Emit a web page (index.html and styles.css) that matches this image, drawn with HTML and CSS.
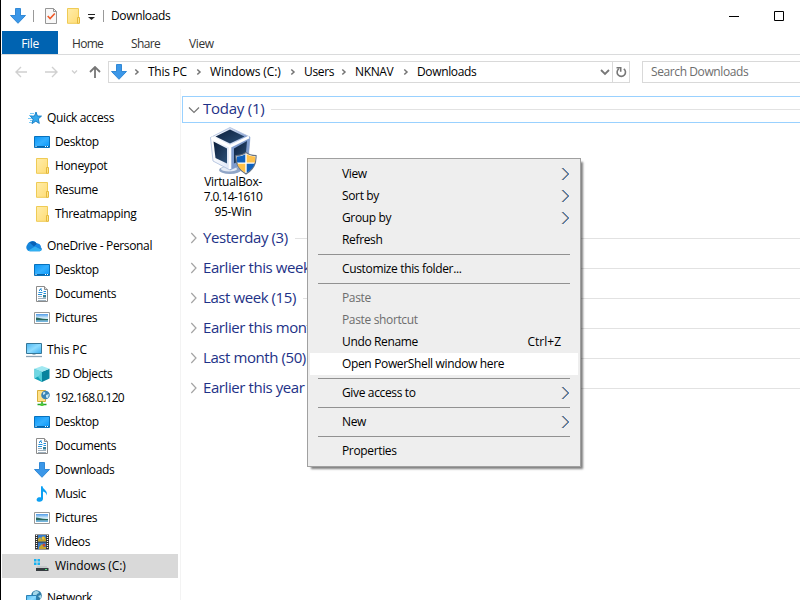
FILE: index.html
```html
<!DOCTYPE html>
<html lang="en">
<head>
<meta charset="utf-8">
<title>Downloads</title>
<link rel="stylesheet" href="styles.css">
</head>
<body>
<svg class="defs" aria-hidden="true">
  <defs>
    <linearGradient id="gb" x1="0" y1="0" x2="1" y2="1"><stop offset="0" stop-color="#0a95f5"/><stop offset=".5" stop-color="#35b0ff"/><stop offset="1" stop-color="#0795f8"/></linearGradient>
    <linearGradient id="gf" x1="0" y1="0" x2="1" y2="1"><stop offset="0" stop-color="#ffedaa"/><stop offset="1" stop-color="#ffdc76"/></linearGradient>
    <linearGradient id="gs" x1="0" y1="0" x2="0" y2="1"><stop offset="0" stop-color="#4f9be8"/><stop offset=".5" stop-color="#d8eef8"/><stop offset="1" stop-color="#8cc4dd"/></linearGradient>
    <linearGradient id="gm" x1="0" y1="0" x2="1" y2="1"><stop offset="0" stop-color="#4ab5f2"/><stop offset=".5" stop-color="#8fdcff"/><stop offset="1" stop-color="#39adf0"/></linearGradient>
    <linearGradient id="gc" x1="0" y1="0" x2="1" y2="1"><stop offset="0" stop-color="#0c1f3c"/><stop offset="1" stop-color="#2c5078"/></linearGradient>
    <linearGradient id="ge" x1="0" y1="0" x2="1" y2="0"><stop offset="0" stop-color="#ffffff"/><stop offset=".5" stop-color="#dbe4f6"/><stop offset="1" stop-color="#6f8ec6"/></linearGradient>
  </defs>
  <symbol id="down" viewBox="0 0 16 16"><path d="M5.5.5h5v7h5L8 15.3.5 7.500h5z" fill="#3b97e8" stroke="#2681d3" stroke-width=".9"/></symbol>
  <symbol id="desktop" viewBox="0 0 16 16"><path d="M.5 2.500h15v11H.5z" fill="url(#gb)" stroke="#0872bd"/><path d="M1 12.500h14" stroke="#0764a8"/><path d="M1.500 12.500h1M11 12.500h1M13 12.500h1" stroke="#fff"/></symbol>
  <symbol id="folder" viewBox="0 0 16 16"><path d="M2.500.500h11v14.800h-11z" fill="url(#gf)" stroke="#efcb55"/><path d="M12.500 9.500h2v5.800h-2z" fill="#ffe48c" stroke="#e4b93c"/></symbol>
  <symbol id="doc" viewBox="0 0 16 16"><path d="M2.500.500h8l3 3v12h-11z" fill="#fff" stroke="#8b8b8b"/><path d="M10.500.500v3h3" fill="#ddd" stroke="#8b8b8b"/><path d="M6.500 2.500h1M5.500 3.500h2M5 4.500h1M7 4.500h1M4.500 6.500h4M9.500 5.500h2.500M9.500 7.500h2.500M4 8.500h4" stroke="#258fd9"/><path d="M4 10.500h4M4 12.500h8M4 14.500h8" stroke="#9fb0bd"/><path d="M9 9h3v2.500H9z" fill="#357f99"/></symbol>
  <symbol id="pic" viewBox="0 0 16 16"><path d="M.5 2.500h15v11H.5z" fill="#fff" stroke="#999"/><path d="M2 4h12v8H2z" fill="url(#gs)"/><path d="M2 7.500c3 0 6 2 12 1.500v1.500H2z" fill="#28675d"/><path d="M2 10.500h12V12H2z" fill="#74b5dd"/></symbol>
  <symbol id="star" viewBox="0 0 16 16"><path d="M10 2l1.400 4 4.100.1-3.200 2.800 1 4.500-3.500-2.200-3.800 2.400 1.100-4.500L4.300 6.200l4.200-.2z" fill="#35a9ec" stroke="#127bc4" stroke-width=".9"/><path d="M4 3.500h4M3 5.500h3M2 8.500h4M4 10.500h2M3 12.500h3" stroke="#6cc4f4" stroke-width=".9"/></symbol>
  <symbol id="cloud" viewBox="0 0 16 16"><path d="M4 13.300a4 4 0 0 1-2.800-6.500A5.300 5.300 0 0 1 10.700 5.500a4 4 0 0 1 4 3.700A2.200 2.200 0 0 1 13.800 13.300z" fill="#1686dc"/><path d="M3.500 4.600a5 5 0 0 1 7.500 1.300L8 8.600z" fill="#0862b7"/><path d="M8 8.500l3.400-3a4 4 0 0 1 3.400 4z" fill="#1787e5"/><path d="M2 12.700l7-4.200 6.500 3.300a2 2 0 0 1-1.800 1.500H4z" fill="#32b0f1"/></symbol>
  <symbol id="pc" viewBox="0 0 16 16"><path d="M.5 1.500h15v10H.5z" fill="url(#gm)" stroke="#367798"/><path d="M6.500 12h3v1h-3z" fill="#a8bdc9"/><path d="M0 14.500h16" stroke="#8da3b3" stroke-width="1.300"/></symbol>
  <symbol id="cube" viewBox="0 0 16 16"><path d="M.5 2.700L8 5.700V16L.5 12.500z" fill="#13a3b8"/><path d="M15.500 2.700L8 5.700V16l7.500-3.500z" fill="#08839d"/><path d="M.5 2.700L8 0l7.500 2.700L8 5.700z" fill="#a0e8f1"/><path d="M8 5.700V16l-4-5.300z" fill="#50cbd8"/><path d="M.5 2.700L8 5.700 5 10 .5 12.500z" fill="#6fd7e3"/></symbol>
  <symbol id="ftp" viewBox="0 0 16 16"><path d="M3.500.500h8v11h-8z" fill="#ffe188" stroke="#d9af3b"/><circle cx="11.500" cy="5" r="4.300" fill="#3c83b5"/><path d="M9 2.500c2-1.500 3 0 2 1.500l-2 1zM12 5l3-1-1 4-2-.5z" fill="#c2e5f4"/><path d="M8 11.500v3M3.500 14.500h9" stroke="#25a32a" stroke-width="1.500"/><path d="M6.500 13.500h3v2.500h-3z" fill="#50cb38"/></symbol>
  <symbol id="music" viewBox="0 0 16 16"><path d="M7 .3h1.600c.2 3.300 5.700 4.200 4 9.200-.3-2.500-1.700-3.700-3.600-4v7.300c0 2.200-2 3.200-4 3s-3-1.700-2.100-3.100C3.700 11.400 5.500 11 7 11.500z" fill="#0ca0f3"/></symbol>
  <symbol id="video" viewBox="0 0 16 16"><path d="M1 .500h14v15H1z" fill="#303030"/><path d="M4 1h8v6.500H4zM4 8.500h8V15H4z" fill="#367dce"/><path d="M4 5l2-2 2 3 2-4 2 3v2.500H4zM5 13l3-3 2 3h2v2H5z" fill="#c5a62d"/><circle cx="9" cy="4" r="1.500" fill="#f2c22f"/><circle cx="10" cy="11" r="1.500" fill="#ca4832"/><path d="M2.500 1v14M13.500 1v14" stroke="#fff" stroke-width="1.300" stroke-dasharray="1 1"/></symbol>
  <symbol id="drive" viewBox="0 0 16 16"><path d="M0 1h2.500v2.500H0zM3.500 1H6v2.500H3.500zM0 4.500h2.500V7H0zM3.500 4.500H6V7H3.500z" fill="#17b2f2"/><path d="M3.500 8h9l2 2.500H2z" fill="#c5c8ca"/><path d="M2 10h12.500v3H2z" fill="#353b40"/><path d="M11 11.500h2" stroke="#46e67a"/></symbol>
  <symbol id="net" viewBox="0 0 16 16"><circle cx="10.500" cy="5.500" r="5.300" fill="#317da7"/><path d="M7 3c2-3 6-2 6 0l-2 1-1 2-3 1zM12 6l3-1v4z" fill="#a6d8e9"/><path d="M.5 5.500h10v8H.5z" fill="url(#gm)" stroke="#2d82b4"/></symbol>
  <symbol id="chev" viewBox="0 0 8 8"><path d="M2.300 1.500L5 4 2.300 6.500" fill="none" stroke="#747474" stroke-width="1.500"/></symbol>
  <symbol id="exp" viewBox="0 0 8 12"><path d="M1.300 1L6 6l-4.700 5" fill="none" stroke="#a4a4a4" stroke-width="1.200"/></symbol>
  <symbol id="sub" viewBox="0 0 9 14"><path d="M.7 1L6.700 7l-6 6" fill="none" stroke="#dba775"/><path d="M1.900 1l6 6-6 6" fill="none" stroke="#3b91df"/><path d="M1.300 1l6 6-6 6" fill="none" stroke="#29294d" stroke-width=".6"/></symbol>
</svg>
<div class="window">
  <header class="titlebar">
    <svg class="i16 app"><use href="#down"/></svg><i class="bar bar-a"></i>
    <svg class="i16 check" viewBox="0 0 16 16"><path d="M2.500.500h8l3 3v12h-11z" fill="#f8f8f8" stroke="#969696"/><path d="M10.500.500v3h3" fill="none" stroke="#969696"/><path d="M4.700 8l2.400 2.600L11.800 5.500" fill="none" stroke="#ef5a29" stroke-width="1.600"/></svg>
    <svg class="i16 fold"><use href="#folder"/></svg>
    <svg class="drop" viewBox="0 0 7 6"><path d="M0 .5h7" stroke="#222"/><path d="M0 3h7L3.500 6z" fill="#222"/></svg>
    <i class="bar bar-b"></i><span class="title">Downloads</span>
    <svg class="winbtns" viewBox="0 0 60 12"><path d="M0 6.500h10M45.500 1.500h9v9h-9z" fill="none" stroke="#000"/></svg>
  </header>
  <nav class="tabs"><span class="file">File</span><span class="home">Home</span><span class="share">Share</span><span class="view">View</span></nav>
  <div class="address">
    <svg class="navs" viewBox="0 0 88 16" fill="none"><path d="M26 8H15M20 3l-5 5 5 5" stroke="#d0d0d0" stroke-width="1.400"/><path d="M44 8h11.500M51 3l5 5-5 5" stroke="#d0d0d0" stroke-width="1.400"/><path d="M71 6.500L73.500 9 76 6.500" stroke="#d0d0d0" stroke-width="1.300"/></svg>
    <svg class="up" viewBox="0 0 12 12"><path d="M6 12V1M1 6l5-5 5 5" fill="none" stroke="#767676" stroke-width="1.800"/></svg>
    <div class="path">
      <svg class="i16"><use href="#down"/></svg>
      <svg class="c"><use href="#chev"/></svg><span class="p1">This PC</span>
      <svg class="c"><use href="#chev"/></svg><span class="p2">Windows (C:)</span>
      <svg class="c"><use href="#chev"/></svg><span class="p3">Users</span>
      <svg class="c"><use href="#chev"/></svg><span class="p4">NKNAV</span>
      <svg class="c"><use href="#chev"/></svg><span class="p5">Downloads</span>
      <svg class="dd" viewBox="0 0 10 8"><path d="M1 2l4 4 4-4" fill="none" stroke="#777" stroke-width="1.800"/></svg>
      <div class="refresh"><svg viewBox="0 0 12 12"><path d="M8.800 2.800a4.200 4.200 0 1 1-5 0M1.500 1.700h4.200v4" fill="none" stroke="#777" stroke-width="1.600"/></svg></div>
    </div>
    <div class="search">Search Downloads</div>
  </div>
  <div class="body">
    <aside class="side">
      <section>
        <div class="row top"><svg class="i16"><use href="#star"/></svg><span>Quick access</span></div>
        <div class="row"><svg class="i16"><use href="#desktop"/></svg><span>Desktop</span></div>
        <div class="row"><svg class="i16"><use href="#folder"/></svg><span>Honeypot</span></div>
        <div class="row"><svg class="i16"><use href="#folder"/></svg><span>Resume</span></div>
        <div class="row"><svg class="i16"><use href="#folder"/></svg><span>Threatmapping</span></div>
      </section>
      <section>
        <div class="row top"><svg class="i16"><use href="#cloud"/></svg><span>OneDrive - Personal</span></div>
        <div class="row"><svg class="i16"><use href="#desktop"/></svg><span>Desktop</span></div>
        <div class="row"><svg class="i16"><use href="#doc"/></svg><span>Documents</span></div>
        <div class="row"><svg class="i16"><use href="#pic"/></svg><span>Pictures</span></div>
      </section>
      <section>
        <div class="row top"><svg class="i16"><use href="#pc"/></svg><span class="loose">This PC</span></div>
        <div class="row"><svg class="i16"><use href="#cube"/></svg><span>3D Objects</span></div>
        <div class="row"><svg class="i16"><use href="#ftp"/></svg><span class="ip">192.168.0.120</span></div>
        <div class="row"><svg class="i16"><use href="#desktop"/></svg><span>Desktop</span></div>
        <div class="row"><svg class="i16"><use href="#doc"/></svg><span>Documents</span></div>
        <div class="row"><svg class="i16"><use href="#down"/></svg><span>Downloads</span></div>
        <div class="row"><svg class="i16"><use href="#music"/></svg><span>Music</span></div>
        <div class="row"><svg class="i16"><use href="#pic"/></svg><span>Pictures</span></div>
        <div class="row"><svg class="i16"><use href="#video"/></svg><span>Videos</span></div>
        <div class="row sel"><svg class="i16"><use href="#drive"/></svg><span class="loose">Windows (C:)</span></div>
      </section>
      <section>
        <div class="row top"><svg class="i16"><use href="#net"/></svg><span>Network</span></div>
      </section>
    </aside>
    <main class="main">
      <div class="today"><svg class="open" viewBox="0 0 12 8"><path d="M1 1.500l5 5 5-5" fill="none" stroke="#777" stroke-width="1.200"/></svg><span>Today (1)</span><i></i></div>
      <div class="fileitem">
        <svg class="vbox" viewBox="0 0 48 48">
          <ellipse cx="21" cy="43" rx="11" ry="4" fill="#8fa5c7"/><ellipse cx="20" cy="42" rx="8" ry="2.500" fill="#e4ebf6"/>
          <path d="M21 .5l20 9.500-2 25L21 43 4 34 1.500 10.500z" fill="url(#ge)" stroke="#a9bbdb" stroke-width=".8"/>
          <path d="M21 20l20-10-2 25-18 8z" fill="#7f9ccd"/>
          <path d="M21 2.500l14.500 7-14.500 7-14.500-7z" fill="url(#gc)"/><path d="M4.500 14.500l13.500 7v15L6.500 31z" fill="url(#gc)"/><path d="M38 14l-13 7.500v15L36.500 31z" fill="url(#gc)"/>
          <path d="M2.500 10.500L21 19.500l19-9.500M21 19.500V42" fill="none" stroke="#fff" stroke-width="2.600"/>
          <path d="M37 25.500c3 2.500 6 3 10 3 .5 8-3 14.500-10 18.500-7-4-10.500-10.500-10-18.500 4 0 7-.5 10-3z" fill="#fff" stroke="#687382" stroke-width="1.200"/>
          <path d="M36.300 27.300V35.500h-8.200c-.2-2-.2-4-.1-6 3.200-.1 5.600-.7 8.300-2.200zM37.700 36.800h7.900c-1.200 3.700-4 6.700-7.900 9z" fill="#0e60bd"/><path d="M37.700 27.300c2.600 1.500 5.200 2.100 8.400 2.200.1 2 .1 4-.2 6h-8.200zM36.300 36.800h-8c1.200 3.700 4 6.700 8 9z" fill="#ffc14b"/>
        </svg>
        <span class="v1">VirtualBox-</span><span class="v2">7.0.14-1610</span><span class="v3">95-Win</span>
      </div>
      <div class="group"><svg><use href="#exp"/></svg><span>Yesterday (3)</span><i></i></div>
      <div class="group"><svg><use href="#exp"/></svg><span>Earlier this week (8)</span><i></i></div>
      <div class="group"><svg><use href="#exp"/></svg><span>Last week (15)</span><i></i></div>
      <div class="group"><svg><use href="#exp"/></svg><span>Earlier this month (9)</span><i></i></div>
      <div class="group"><svg><use href="#exp"/></svg><span>Last month (50)</span><i></i></div>
      <div class="group"><svg><use href="#exp"/></svg><span>Earlier this year (9)</span><i></i></div>
    </main>
  </div>
  <div class="menu">
    <div class="mi"><span>View</span><svg><use href="#sub"/></svg></div>
    <div class="mi"><span>Sort by</span><svg><use href="#sub"/></svg></div>
    <div class="mi"><span>Group by</span><svg><use href="#sub"/></svg></div>
    <div class="mi"><span>Refresh</span></div>
    <hr>
    <div class="mi"><span>Customize this folder...</span></div>
    <hr>
    <div class="mi off"><span>Paste</span></div>
    <div class="mi off"><span>Paste shortcut</span></div>
    <div class="mi"><span>Undo Rename</span><span class="key">Ctrl+Z</span></div>
    <div class="mi hot"><span>Open PowerShell window here</span></div>
    <hr>
    <div class="mi"><span>Give access to</span><svg><use href="#sub"/></svg></div>
    <hr>
    <div class="mi"><span>New</span><svg><use href="#sub"/></svg></div>
    <hr>
    <div class="mi"><span>Properties</span></div>
  </div>
</div>
</body>
</html>
```
FILE: styles.css
```css
* { box-sizing: border-box; }
body { margin: 0; font: 12px/16px "Open Sans", "Noto Sans", sans-serif; letter-spacing: -0.35px; color: #000; }
svg { display: block; flex: none; }
.defs { position: absolute; width: 0; height: 0; }
.window { position: relative; width: 800px; height: 600px; overflow: hidden; background: #fff; border-left: 1px solid #000; white-space: nowrap; }
.i16 { width: 16px; height: 16px; }
.titlebar { height: 31px; display: flex; align-items: center; padding-left: 9px; }
.bar { width: 1px; height: 12px; background: #999; }
.bar-a { margin-left: 7px; }
.check { margin-left: 9px; }
.fold { margin-left: 6px; }
.drop { width: 7px; height: 6px; margin: 3px 0 0 7px; }
.bar-b { margin-left: 8px; }
.title { margin-left: 7px; padding-top: 1px; }
.winbtns { width: 60px; height: 12px; margin: 0 11px 0 auto; }
.tabs { height: 24px; display: flex; border-bottom: 1px solid #dadbdc; line-height: 25px; color: #333; }
.tabs span { height: 23px; }
.file { width: 56px; margin-left: 1px; background: #0063b1; color: #fff; text-align: center; }
.home { margin-left: 14px; width: 59px; letter-spacing: -0.7px; }
.share { width: 58px; letter-spacing: -0.6px; }
.address { height: 34px; display: flex; align-items: center; }
.navs { width: 88px; height: 16px; }
.up { width: 12px; height: 12px; }
.path { width: 522px; height: 22px; margin-left: 7px; border: 1px solid #d9d9d9; display: flex; align-items: center; padding-left: 2px; }
.path .c { width: 8px; height: 8px; }
.path .i16 + .c { margin-left: 6px; }
.path span { margin-left: 7px; }
.path .p1 { width: 47px; letter-spacing: -0.25px; }
.path .p2 { width: 79px; letter-spacing: -0.1px; }
.p3 { width: 36px; }
.p4 { width: 47px; }
.dd { width: 10px; height: 8px; margin-left: auto; }
.refresh { width: 17px; height: 20px; margin-left: 2px; border-left: 1px solid #d9d9d9; display: flex; align-items: center; justify-content: center; }
.refresh svg { width: 12px; height: 12px; }
.search { flex: 1; height: 22px; margin-left: 12px; border: 1px solid #d9d9d9; border-right: 0; padding: 2px 0 0 8px; color: #6d6d6d; letter-spacing: -0.4px; }
.body { display: flex; height: 511px; }
.side { width: 180px; flex: none; padding-top: 17px; border-right: 1px solid #f3f3f3; }
section { margin-bottom: 8px; }
.row { height: 24px; width: 176px; margin-left: 1px; display: flex; align-items: center; padding-left: 32px; }
.row span { margin-left: 5px; }
.row.top { padding-left: 24px; }
.row .ip { letter-spacing: -0.7px; }
.row .loose { letter-spacing: -0.1px; }
.sel { background: #d9d9d9; }
.main { flex: 1; padding: 7px 0 0 1px; min-width: 0; }
.today, .group { display: flex; align-items: center; font-size: 15px; line-height: 20px; letter-spacing: -0.42px; color: #1e3287; }
.today { height: 27px; border: 1px solid #99d1ff; border-right: 0; padding-left: 5px; }
.open { width: 12px; height: 8px; }
.today span { margin-left: 3px; padding-bottom: 3px; letter-spacing: -0.25px; }
.today i, .group i { flex: 1; height: 1px; margin-left: 7px; background: #e2e2e2; }
.fileitem { height: 100px; width: 102px; padding-top: 4px; display: flex; flex-direction: column; align-items: center; line-height: 15px; }
.vbox { width: 48px; height: 48px; margin-bottom: -1px; }
.v2 { letter-spacing: -0.6px; }
.group { height: 30px; padding-left: 8px; }
.group svg { width: 8px; height: 12px; }
.group span { margin-left: 5px; padding-bottom: 2px; }
.menu { position: absolute; left: 306px; top: 158px; width: 274px; height: 309px; border: 1px solid #a0a0a0; background: #eee; padding: 4px 2px; box-shadow: 3px 3px 2px -1px rgba(0, 0, 0, .5); }
.mi { height: 22px; display: flex; align-items: center; padding: 0 8px 0 32px; }
.mi svg { width: 9px; height: 14px; margin-left: auto; }
.key { margin: 0 9px 0 auto; letter-spacing: 0; }
.off { color: #6d6d6d; }
.hot { background: #fff; }
.menu hr { height: 1px; border: 0; background: #919191; margin: 3px 8px; }
```
